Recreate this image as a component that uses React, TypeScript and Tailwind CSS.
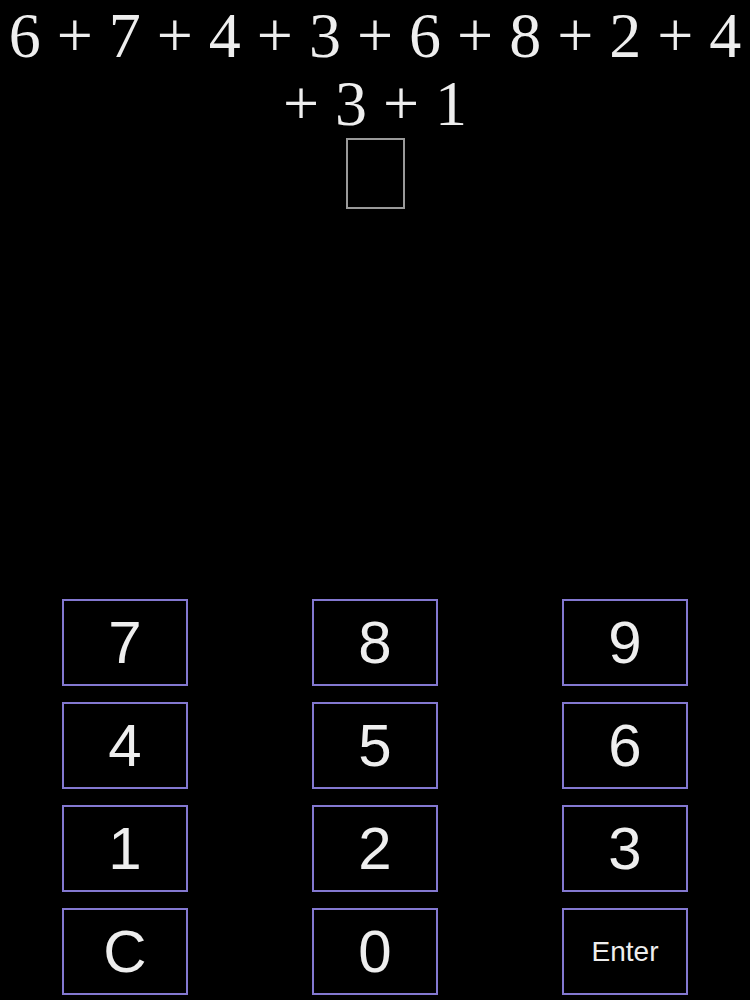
import React, { useState } from 'react';

const KEYS: string[] = ['7', '8', '9', '4', '5', '6', '1', '2', '3', 'C', '0', 'Enter'];

export default function App() {
    const [answer, setAnswer] = useState('');

    const press = (key: string) => {
        if (key === 'C') setAnswer('');
        else if (key === 'Enter') setAnswer('');
        else setAnswer(a => a + key);
    };

    return (
        <div className="flex h-screen flex-col bg-black text-[#eeeeee]">
            <div
                className="px-2 pt-[2px] text-center text-[64px] leading-[68px]"
                style={{ fontFamily: '"Liberation Serif", "Times New Roman", serif' }}
            >
                6 + 7 + 4 + 3 + 6 + 8 + 2 + 4 + 3 + 1
            </div>
            <div className="flex justify-center">
                <div className="flex h-[71px] w-[59px] items-center justify-center border-2 border-[#9a9a9a] text-3xl">
                    {answer}
                </div>
            </div>
            <div
                className="mt-auto grid grid-cols-3 gap-y-[16px] pb-[5px]"
                style={{ fontFamily: '"Liberation Sans", Arial, sans-serif' }}
            >
                {KEYS.map(key => (
                    <div key={key} className="flex justify-center">
                        <button
                            onClick={() => press(key)}
                            className={`flex h-[87px] w-[126px] items-center justify-center border-2 border-[#8378d0] bg-black text-[#eeeeee] ${
                                key === 'Enter' ? 'text-[28px]' : 'text-[60px]'
                            }`}
                        >
                            {key}
                        </button>
                    </div>
                ))}
            </div>
        </div>
    );
}
